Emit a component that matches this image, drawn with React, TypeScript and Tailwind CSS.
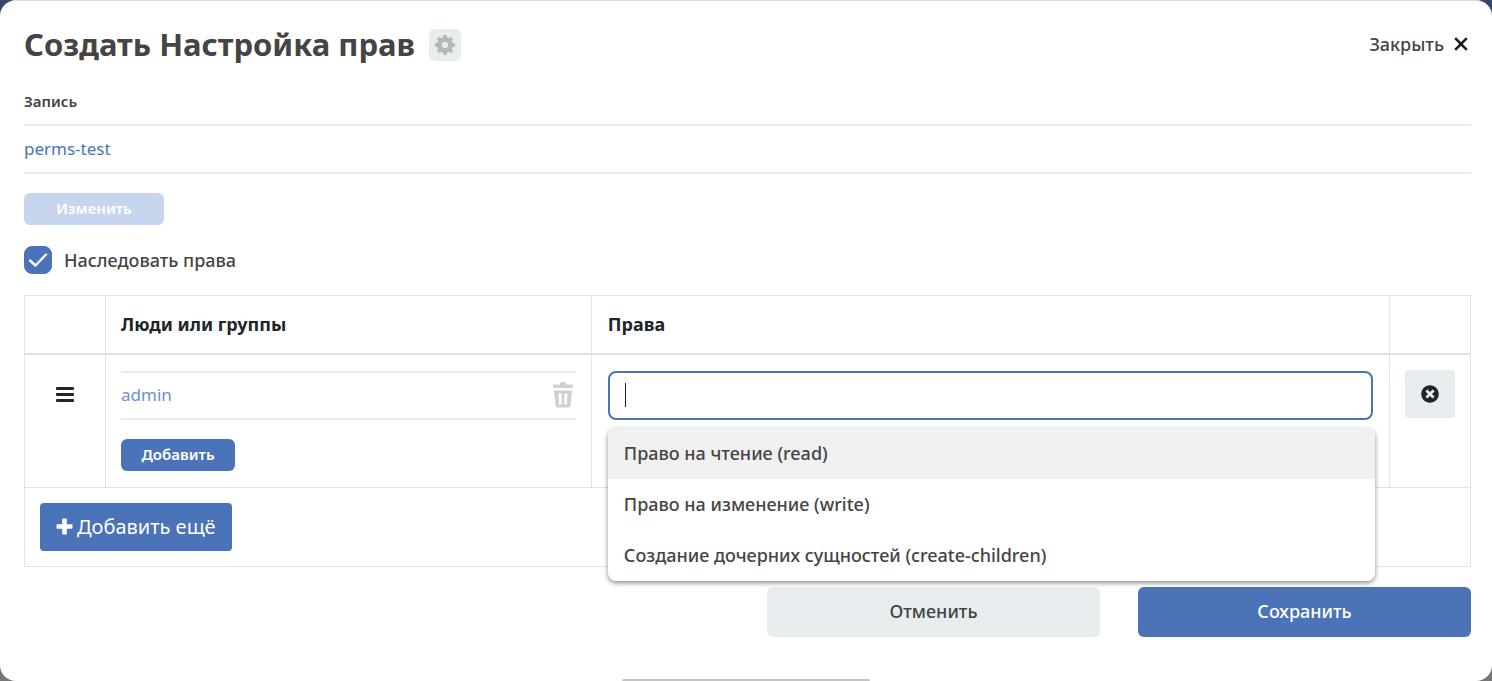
import { useState } from "react";
import { FaTimesCircle } from "react-icons/fa";

const permissions = [
  "Право на чтение (read)",
  "Право на изменение (write)",
  "Создание дочерних сущностей (create-children)",
];

const gearTeeth = [0, 45, 90, 135, 180, 225, 270, 315];

function GearIcon() {
  return (
    <svg viewBox="0 0 20 20" className="size-5" fill="currentColor" aria-hidden="true">
      {gearTeeth.map((angle) => (
        <path key={angle} d="M7.600 4 8.300.4Q8.400 0 8.800 0h2.400q.4 0 .5.4L12.400 4z" transform={`rotate(${angle} 10 10)`} />
      ))}
      <circle cx="10" cy="10" r="5.400" fill="none" stroke="currentColor" strokeWidth="4.600" />
    </svg>
  );
}

function PlusIcon() {
  return (
    <svg viewBox="0 0 17 17" className="size-[17px]" fill="currentColor" aria-hidden="true">
      <rect x="6.200" y="0.500" width="4.600" height="16" rx="1" />
      <rect x="0.500" y="6.200" width="16" height="4.600" rx="1" />
    </svg>
  );
}

function TrashIcon() {
  return (
    <svg viewBox="0 0 20 26" className="h-[26px] w-5" fill="currentColor" aria-hidden="true">
      <path d="M7 2.5V1.6C7 .7 7.6 0 8.5 0h3c.9 0 1.500.7 1.500 1.600v.9h6c.6 0 1 .4 1 1v2.500H0V3.500c0-.6.4-1 1-1z" />
      <path
        fillRule="evenodd"
        d="M1 8.500h18l-1.600 15.500c-.1.900-.8 1.500-1.700 1.500H4.300c-.9 0-1.600-.6-1.700-1.500zM5.500 11.500l.6 11h2.600v-11zm5.800 0v11h2.600l.6-11z"
      />
    </svg>
  );
}

export default function App() {
  const [inherit, setInherit] = useState(true);
  const [query, setQuery] = useState("");

  return (
    <div className="min-h-screen bg-linear-to-b from-[#34466b] from-50% to-[#777777] to-50% font-['Noto_Sans','Open_Sans',sans-serif] text-[#444444]">
      <main
        role="dialog"
        aria-labelledby="dialog-title"
        className="flex min-h-screen flex-col rounded-2xl border-t border-[#dddddd] bg-white"
      >
        <div className="px-6 pr-[21px]">
          <header className="flex items-start justify-between pt-6">
            <div className="flex items-center gap-[14px]">
              <h1 id="dialog-title" className="pb-[2px] text-[31px] leading-[38px] font-bold">
                Создать Настройка прав
              </h1>
              <button
                type="button"
                aria-label="Настройки"
                className="flex size-8 items-center justify-center rounded-md bg-[#e7ecef] text-[#b7b7b7]"
              >
                <GearIcon />
              </button>
            </div>
            <button type="button" className="flex h-[38px] items-center gap-[10px] text-[18px] leading-6 font-medium">
              Закрыть
              <svg viewBox="0 0 14 14" className="mr-[3px] size-[14px]" stroke="#1c1c1c" strokeWidth="2.6" fill="none" aria-hidden="true">
                <path d="M1.200 1.200 12.800 12.800M12.800 1.200 1.200 12.800" />
              </svg>
            </button>
          </header>

          <section aria-labelledby="record-label">
            <p id="record-label" className="pt-6 text-[15px] leading-6 font-semibold">
              Запись
            </p>
            <div className="mt-[11px] border-y-2 border-[#e7ecee] py-[10px]">
              <a href="#record" className="block text-[17px] leading-[26px] text-[#4a73b8]">
                perms-test
              </a>
            </div>
            <button
              type="button"
              disabled
              className="mt-[19px] block h-8 w-[140px] rounded-md bg-[#c7d5ef] pb-[2px] text-[15px] font-semibold text-white"
            >
              Изменить
            </button>
          </section>

          <label className="mt-[21px] flex w-fit items-center gap-3 text-[18px] leading-7 font-medium">
            <span className="grid">
              <input
                type="checkbox"
                checked={inherit}
                onChange={(e) => setInherit(e.target.checked)}
                className="peer col-start-1 row-start-1 size-7 appearance-none rounded-lg border border-[#4a73b8] checked:bg-[#4a73b8]"
              />
              <svg
                viewBox="0 0 28 28"
                className="pointer-events-none invisible col-start-1 row-start-1 size-7 peer-checked:visible"
                fill="none"
                stroke="white"
                strokeWidth="2.4"
                strokeLinecap="round"
                strokeLinejoin="round"
                aria-hidden="true"
              >
                <path d="M6 14.500 11.500 19.500 22 8.500" />
              </svg>
            </span>
            Наследовать права
          </label>

          <table className="mt-[21px] w-full table-fixed border-collapse border border-[#e0e4e9] text-left">
            <colgroup>
              <col className="w-[81px]" />
              <col className="w-[33.6%]" />
              <col />
              <col className="w-[81px]" />
            </colgroup>
            <thead>
              <tr className="h-[58px] border-b-2 border-[#dce1e7] text-[18px] leading-6 text-[#212529]">
                <td className="border-r border-[#e0e4e9]" />
                <th scope="col" className="border-r border-[#e0e4e9] px-[15px] font-bold">
                  Люди или группы
                </th>
                <th scope="col" className="border-r border-[#e0e4e9] px-4 font-bold">
                  Права
                </th>
                <td />
              </tr>
            </thead>
            <tbody>
              <tr className="border-b border-[#e0e4e9] align-top">
                <td className="border-r border-[#e0e4e9] pt-8">
                  <button type="button" aria-label="Переместить" className="mx-auto block text-[#212529]">
                    <svg viewBox="0 0 18 15" className="h-[15px] w-[18px]" fill="currentColor" aria-hidden="true">
                      <rect width="18" height="3" rx="1" />
                      <rect y="6" width="18" height="3" rx="1" />
                      <rect y="12" width="18" height="3" rx="1" />
                    </svg>
                  </button>
                </td>
                <td className="border-r border-[#e0e4e9] px-[15px] py-4">
                  <div className="flex h-[49px] items-center justify-between border-y-2 border-[#e7ecee] pr-[3px]">
                    <a href="#admin" className="text-[17px] leading-6 text-[#6f90c8]">
                      admin
                    </a>
                    <button type="button" aria-label="Удалить admin" className="text-[#d0d0d0]">
                      <TrashIcon />
                    </button>
                  </div>
                  <button
                    type="button"
                    className="mt-[19px] block h-8 w-[114px] rounded-md bg-[#4a73b8] text-[15px] font-semibold text-white"
                  >
                    Добавить
                  </button>
                </td>
                <td className="border-r border-[#e0e4e9] px-4 py-4">
                  <div className="relative">
                    <input
                      type="text"
                      role="combobox"
                      aria-label="Права"
                      aria-expanded="true"
                      aria-controls="permission-list"
                      value={query}
                      onChange={(e) => setQuery(e.target.value)}
                      className="block h-[49px] w-full rounded-lg border-2 border-[#4a73b8] bg-white px-4 text-[18px] font-medium outline-none"
                    />
                    <span className="pointer-events-none absolute top-3 left-[17px] h-6 w-px bg-[#222222]" />
                    <ul
                      id="permission-list"
                      role="listbox"
                      className="absolute top-[57px] right-[-2px] left-0 z-10 overflow-hidden rounded-lg bg-white text-[18px] leading-[51px] font-medium shadow-[0_2px_5px_rgba(0,0,0,0.45)]"
                    >
                      {permissions.map((permission, i) => (
                        <li
                          key={permission}
                          role="option"
                          aria-selected={i === 0}
                          className="px-4 aria-selected:bg-[#f0f0f0]"
                        >
                          {permission}
                        </li>
                      ))}
                    </ul>
                  </div>
                </td>
                <td className="pt-[15px]">
                  <button
                    type="button"
                    aria-label="Удалить строку"
                    className="mx-auto flex h-12 w-[50px] items-center justify-center rounded-sm bg-[#e7ecee] text-[#212529]"
                  >
                    <FaTimesCircle size={18} />
                  </button>
                </td>
              </tr>
              <tr>
                <td colSpan={4} className="px-[15px] py-[15px]">
                  <button
                    type="button"
                    className="flex h-12 items-center gap-1 rounded-sm bg-[#4a73b8] px-4 text-[20px] text-white"
                  >
                    <PlusIcon />
                    Добавить ещё
                  </button>
                </td>
              </tr>
            </tbody>
          </table>

          <footer className="mt-5 ml-auto flex w-[704px] max-w-full gap-[38px] text-[18px] font-medium">
            <button type="button" className="h-[50px] flex-1 rounded-md bg-[#e7ecee]">
              Отменить
            </button>
            <button type="button" className="h-[50px] flex-1 rounded-md bg-[#4a73b8] text-white">
              Сохранить
            </button>
          </footer>
        </div>

        <div className="mx-auto mt-auto h-[2px] w-[248px] rounded-t-sm bg-[#c4c4c4]" />
      </main>
    </div>
  );
}
